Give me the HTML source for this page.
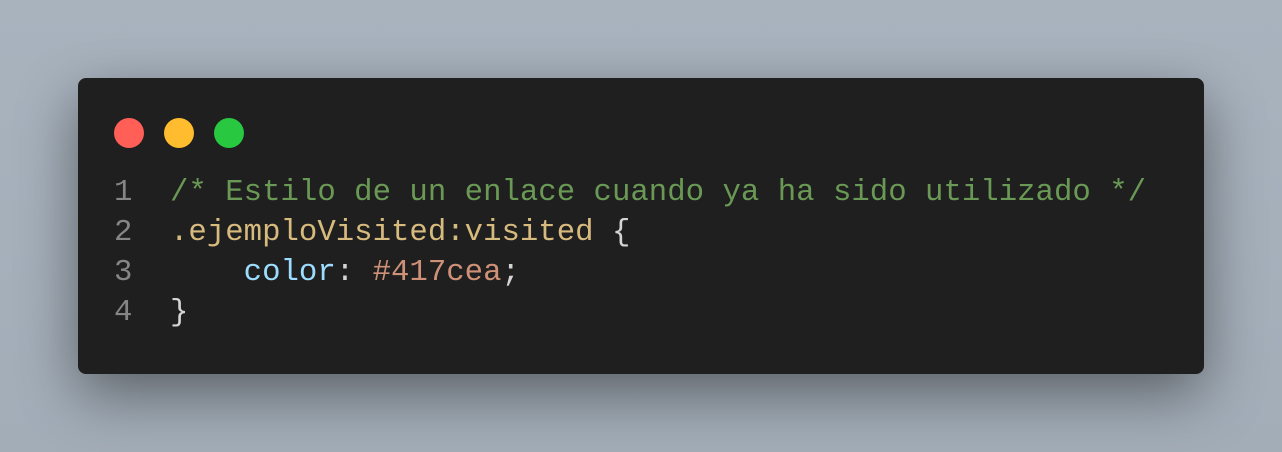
<!DOCTYPE html>
<html><head><meta charset="utf-8"><style>
html,body{margin:0;padding:0;width:1282px;height:452px;overflow:hidden;background:linear-gradient(180deg,#a9b3be,#a3adb8);}
.card{position:absolute;left:78px;top:78px;width:1126px;height:296px;background:#1f1f1f;border-radius:8px;box-shadow:0 20px 60px rgba(0,0,0,0.45);}
.dot{position:absolute;top:40px;width:30px;height:30px;border-radius:50%;}
.code{position:absolute;left:0;top:95px;font-family:"Liberation Mono","DejaVu Sans Mono",monospace;font-size:30.7px;line-height:40px;white-space:pre;color:#d4d4d4;}
.ln{display:inline-block;width:92px;text-align:left;padding-left:36px;box-sizing:border-box;color:#858585;}
.c{color:#6a9955}.s{color:#d7ba7d}.p{color:#9cdcfe}.v{color:#ce9178}
</style></head><body>
<div class="card">
<div class="dot" style="left:36px;background:#ff5f57"></div>
<div class="dot" style="left:86px;background:#febc2e"></div>
<div class="dot" style="left:136px;background:#28c840"></div>
<div class="code"><div><span class="ln">1</span><span class="c">/* Estilo de un enlace cuando ya ha sido utilizado */</span></div><div><span class="ln">2</span><span class="s">.ejemploVisited:visited</span> {</div><div><span class="ln">3</span>    <span class="p">color</span>: <span class="v">#417cea</span>;</div><div><span class="ln">4</span>}</div></div>
</div>
</body></html>
